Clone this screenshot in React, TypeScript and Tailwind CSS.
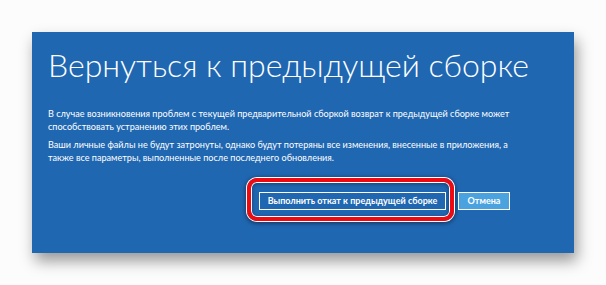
import React from "react";

const body = "font-['Lato',sans-serif]";

export default function App() {
  return (
    <div className="w-[606px] h-[285px] bg-[#fcfcfc] pt-[32px] pl-[32px]">
      <div className="w-[542px] h-[221px] bg-[#2067b2] pl-[16px] shadow-[3px_8px_14px_rgba(0,0,0,0.4)] flex flex-col">
        <h1 className="font-['Lato',sans-serif] font-light text-white text-[32px] leading-[40px] mt-[13px] whitespace-nowrap">
          Вернуться к предыдущей сборке
        </h1>
        <div className={`${body} text-white text-[9.1px] leading-[13px] mt-[22px] whitespace-nowrap`}>
          <p>
            В случае возникновения проблем с текущей предварительной сборкой возврат к предыдущей сборке может
            <br />
            способствовать устранению этих проблем.
          </p>
          <p className="mt-[5px]">
            Ваши личные файлы не будут затронуты, однако будут потеряны все изменения, внесенные в приложения, а
            <br />
            также все параметры, выполненные после последнего обновления.
          </p>
        </div>
        <div className="flex justify-end gap-[12px] mt-[28px] pr-[64px]">
          <div className="relative">
            <button
              className={`${body} w-[187px] h-[18px] border border-white text-white text-[9px] font-bold whitespace-nowrap flex items-center justify-center`}
            >
              Выполнить откат к предыдущей сборке
            </button>
            <div className="absolute -left-[12px] -right-[8px] -top-[14px] -bottom-[11px] rounded-[10px] border-[4px] border-[#ee0a10] shadow-[0_0_0_1px_#fff,inset_0_0_0_1px_#fff,0_1px_5px_1px_rgba(0,0,0,0.55),inset_0_1px_5px_rgba(0,0,0,0.5)]" />
          </div>
          <button
            className={`${body} w-[52px] h-[18px] border border-white bg-[#4aa3df] text-white text-[9px] font-bold whitespace-nowrap flex items-center justify-center`}
          >
            Отмена
          </button>
        </div>
      </div>
    </div>
  );
}
